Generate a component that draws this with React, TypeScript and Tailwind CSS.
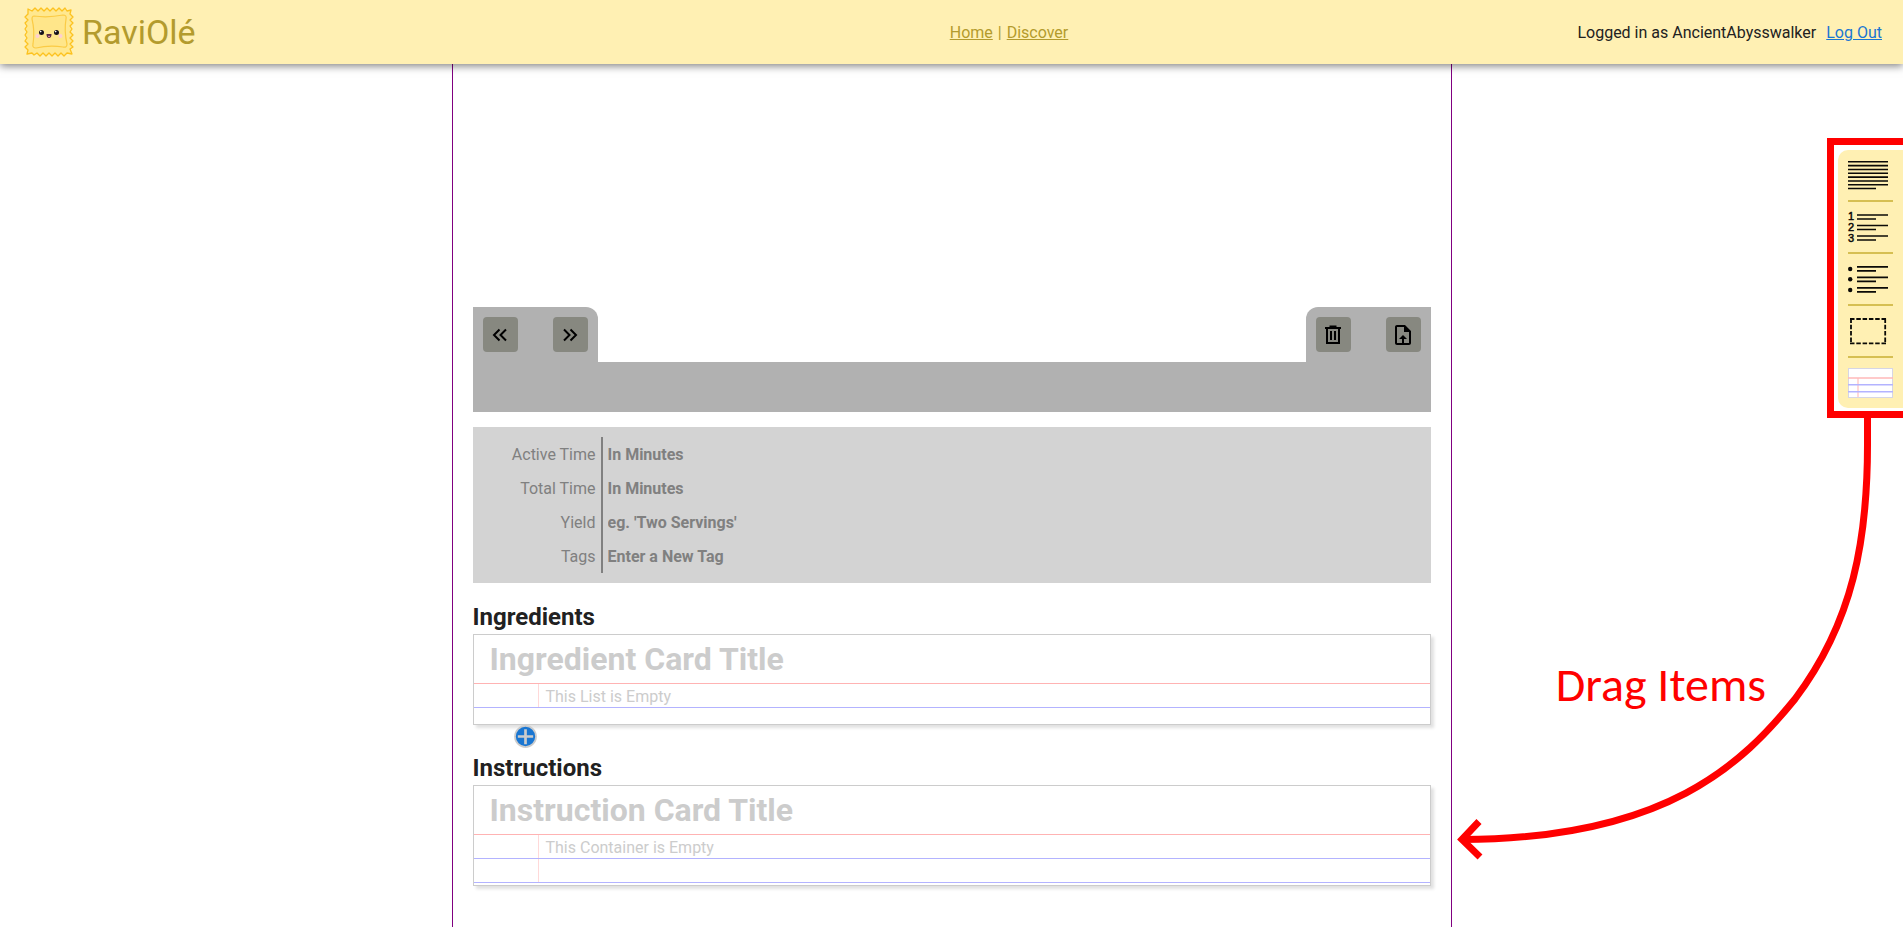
import { type ReactNode } from "react";

function RavioliLogo() {
  return (
    <svg width="50" height="52" viewBox="0 0 50 52" aria-hidden="true">
      <path
        d="M4 3 L8 5 L11 2 L14 5 L17 2 L20 5 L23 2 L26 5 L29 2 L32 5 L35 2 L38 5 L41 2 L43 5 L47 4 L46 8 L49 11 L46 14 L49 17 L46 20 L48 23 L46 26 L49 29 L46 32 L49 35 L46 38 L49 41 L46 43 L48 48 L43 47 L40 50 L37 47 L34 50 L31 47 L28 50 L25 47 L22 50 L19 47 L16 50 L13 47 L10 49 L8 47 L3 48 L4 44 L1 41 L4 38 L1 35 L3 32 L1 29 L3 26 L1 23 L3 20 L1 17 L4 14 L1 11 L4 8 Z"
        fill="#ffe88f"
        stroke="#fcc21f"
        strokeWidth="1.3"
        strokeLinejoin="round"
      />
      <path
        d="M10 10 Q24 12 39 9 Q43 9 42 13 Q40 25 43 38 Q43 42 39 41 Q25 39 12 42 Q8 42 9 38 Q11 25 8 13 Q8 10 10 10 Z"
        fill="#ffe68a"
        stroke="#fbcb45"
        strokeWidth="1.2"
      />
      <circle cx="13.5" cy="30" r="2" fill="#ffcfd0" />
      <circle cx="36.5" cy="30" r="2" fill="#ffcfd0" />
      <circle cx="17.5" cy="26.5" r="2.5" fill="#15111a" />
      <circle cx="32.5" cy="26.5" r="2.5" fill="#15111a" />
      <circle cx="16.7" cy="25.6" r="0.8" fill="#fff" />
      <circle cx="31.7" cy="25.6" r="0.8" fill="#fff" />
      <path d="M22.500 28 H27.500 Q27.500 32 25 32 Q22.500 32 22.500 28 Z" fill="#5b2b45" />
      <path d="M24 30.500 Q25 29.500 26 30.500 Z" fill="#f29bb0" stroke="#f29bb0" strokeWidth="0.6" />
    </svg>
  );
}

function Chevrons({ flip = false }: { flip?: boolean }) {
  return (
    <svg width="24" height="24" viewBox="0 0 24 24" fill="none" stroke="#000" strokeWidth="2" aria-hidden="true">
      <path d={flip ? "M6 6.500 L11.500 12 L6 17.500 M12.500 6.500 L18 12 L12.500 17.500" : "M11.500 6.500 L6 12 L11.500 17.500 M18 6.500 L12.500 12 L18 17.500"} />
    </svg>
  );
}

function UploadFile() {
  return (
    <svg width="24" height="24" viewBox="0 0 24 24" aria-hidden="true">
      <path d="M14 2H6c-1.100 0-2 .9-2 2v16c0 1.100.9 2 2 2h12c1.100 0 2-.9 2-2V8l-6-6zm4 18H6V4h7v5h5v11zM8 16h3v4h2v-4h3l-4-4z" />
    </svg>
  );
}

function Trash() {
  return (
    <svg width="24" height="24" viewBox="0 0 24 24" fill="none" stroke="#000" strokeWidth="2" aria-hidden="true">
      <path d="M4 5 H20 M8.500 3.500 H15.500 M6 5 V20 H18 V5 M10 8 V17 M14 8 V17" />
    </svg>
  );
}

function ToolButton({ label, children }: { label: string; children: ReactNode }) {
  return (
    <button type="button" aria-label={label} className="flex size-[35px] items-center justify-center rounded bg-[#878880]">
      {children}
    </button>
  );
}

function MetaRow({ id, label, placeholder }: { id: string; label: string; placeholder: string }) {
  return (
    <div className="flex h-[34px] items-center">
      <label htmlFor={id} className="w-[118px] shrink-0 pt-[2px] pr-[5px] text-right text-[#808080]">
        {label}
      </label>
      <div className="flex h-full flex-1 items-center border-l-2 border-[#808080] pl-[5px]">
        <input id={id} placeholder={placeholder} className="w-full bg-transparent pt-[2px] font-bold outline-none placeholder:text-[#808080]" />
      </div>
    </div>
  );
}

function RecipeCard({ title, empty, children }: { title: string; empty: string; children: ReactNode }) {
  return (
    <div className="border border-[#ccc] bg-white shadow-[3px_3px_3px_rgba(0,0,0,0.12)]">
      <input
        aria-label={title}
        placeholder={title}
        className="block h-12 w-full bg-transparent px-4 text-[32px] font-bold outline-none placeholder:text-[#ccc]"
      />
      <div className="flex h-[25px] border-y border-t-[#ffb3b3] border-b-[#b3b3ff] text-[#ccc]">
        <div className="w-[65px] border-r border-[#ffd9d9]" />
        <p className="pl-[7px] leading-[26px]">{empty}</p>
      </div>
      {children}
    </div>
  );
}

function ParagraphIcon() {
  return (
    <svg width="45" height="30" viewBox="0 0 45 30" stroke="#0b0a07" strokeWidth="1.6" aria-hidden="true">
      <path d="M0 1.800H40M0 5.600H40M0 9.500H40M0 13.300H40M0 17.100H40M0 21H40M0 24.800H40M0 28.500H28" />
    </svg>
  );
}

function NumberedIcon() {
  return (
    <svg width="45" height="30" viewBox="0 0 45 30" className="overflow-visible" fill="none" stroke="#0b0a07" strokeWidth="1.7" aria-hidden="true">
      <path d="M9 3H40M9 7H28M9 13.500H40M9 17.500H28M9 24H40M9 28H28" />
      <g fill="#0b0a07" strokeWidth="0.5" fontFamily="Liberation Sans, sans-serif" fontSize="11">
        <text x="0" y="8">1</text>
        <text x="0" y="19">2</text>
        <text x="0" y="30">3</text>
      </g>
    </svg>
  );
}

function BulletedIcon() {
  return (
    <svg width="45" height="30" viewBox="0 0 45 30" stroke="#0b0a07" strokeWidth="1.7" aria-hidden="true">
      <path d="M9 2.800H40M9 6.800H28M9 13.300H40M9 17.300H28M9 23.800H40M9 27.800H28" />
      <g stroke="none" fill="#0b0a07">
        <circle cx="2.200" cy="5" r="2.200" />
        <circle cx="2.200" cy="15.300" r="2.200" />
        <circle cx="2.200" cy="26" r="2.200" />
      </g>
    </svg>
  );
}

function ContainerIcon() {
  return (
    <svg width="45" height="30" viewBox="0 0 45 30" fill="none" stroke="#0b0a07" strokeWidth="1.8" aria-hidden="true">
      <path d="M2 3H38M2 27.300H38" strokeDasharray="4.500 1.800" />
      <path d="M3 2.500V28M37.200 2.500V28" strokeDasharray="4.500 1.800" />
    </svg>
  );
}

function CardIcon() {
  return (
    <svg width="45" height="30" viewBox="0 0 45 30" fill="none" aria-hidden="true">
      <rect x="0.500" y="0.500" width="44" height="29" fill="#fff" stroke="#d6d6e4" />
      <path d="M10 10V29" stroke="#ffd9d9" strokeWidth="2" />
      <path d="M0 10H45" stroke="#ffb9b9" strokeWidth="1.6" />
      <path d="M0 16.700H45M0 23.700H45" stroke="#b3b3ff" strokeWidth="1.6" />
    </svg>
  );
}

const tools = [
  { label: "Paragraph", icon: <ParagraphIcon /> },
  { label: "Numbered list", icon: <NumberedIcon /> },
  { label: "Bulleted list", icon: <BulletedIcon /> },
  { label: "Container", icon: <ContainerIcon /> },
  { label: "Card", icon: <CardIcon /> },
];

export default function App() {
  return (
    <div className="relative flex min-h-screen flex-col overflow-hidden bg-white font-[Roboto,sans-serif] text-base text-[#212121]">
      <header className="relative z-10 grid h-16 shrink-0 grid-cols-[1fr_auto_1fr] items-center bg-[#fff0b3] pr-[21px] pl-6 shadow-[0_2px_8px_rgba(0,0,0,0.5)]">
        <div className="flex items-center gap-2">
          <RavioliLogo />
          <h1 className="text-[34px] leading-none text-[#b39b2d]">RaviOlé</h1>
        </div>
        <nav className="flex gap-[5px] pt-[2px] pl-28 text-[#b39b2d]">
          <a href="#home" className="underline">Home</a>
          <span>|</span>
          <a href="#discover" className="underline">Discover</a>
        </nav>
        <div className="flex justify-end gap-[10px] pt-[2px]">
          <span>Logged in as AncientAbysswalker</span>
          <a href="#logout" className="text-[#1976d2] underline">Log Out</a>
        </div>
      </header>

      <main className="mx-auto w-full max-w-[1000px] flex-1 border-x border-[#800080] px-5 pt-[243px]">
        <div className="flex justify-between">
          <div className="flex h-[55px] gap-[35px] rounded-tr-xl bg-[#b1b1b1] p-[10px]">
            <ToolButton label="Previous"><Chevrons /></ToolButton>
            <ToolButton label="Next"><Chevrons flip /></ToolButton>
          </div>
          <div className="flex h-[55px] gap-[35px] rounded-tl-xl bg-[#b1b1b1] p-[10px]">
            <ToolButton label="Delete"><Trash /></ToolButton>
            <ToolButton label="Upload"><UploadFile /></ToolButton>
          </div>
        </div>
        <div className="h-[50px] bg-[#b1b1b1]" />

        <section className="mt-[15px] bg-[#d3d3d3] p-[10px]">
          <MetaRow id="active" label="Active Time" placeholder="In Minutes" />
          <MetaRow id="total" label="Total Time" placeholder="In Minutes" />
          <MetaRow id="yield" label="Yield" placeholder="eg. 'Two Servings'" />
          <MetaRow id="tags" label="Tags" placeholder="Enter a New Tag" />
        </section>

        <h2 className="mt-5 mb-[3px] text-2xl leading-7 font-bold">Ingredients</h2>
        <RecipeCard title="Ingredient Card Title" empty="This List is Empty">
          <div className="h-4" />
        </RecipeCard>
        <div className="flex pl-[41px]">
          <button type="button" aria-label="Add ingredient card" className="size-[23px]">
            <svg width="23" height="23" viewBox="0 0 24 24" aria-hidden="true">
              <circle cx="12" cy="12" r="11" fill="#1976d2" stroke="#ccc" strokeWidth="1.8" />
              <path d="M12 4.500V20M4 12H20" stroke="#ccc" strokeWidth="2.8" />
            </svg>
          </button>
        </div>
        <h2 className="mt-[6px] mb-[3px] text-2xl leading-7 font-bold">Instructions</h2>
        <RecipeCard title="Instruction Card Title" empty="This Container is Empty">
          <div className="flex h-6 border-b border-[#b3b3ff]">
            <div className="w-[65px] border-r border-[#ffd9d9]" />
          </div>
          <div className="h-[2px]" />
        </RecipeCard>
      </main>

      <aside className="absolute top-[138px] right-0 border-7 border-r-0 border-[#ff0000] pt-[5px] pb-[3px] pl-1">
        <div className="rounded-l-[10px] bg-[#fff0b3] p-[10px]">
          <ul className="flex flex-col gap-[10px]">
            {tools.map((tool, i) => (
              <li key={tool.label} className={i < 4 ? "border-b-2 border-[#d6bf52] pb-[10px]" : ""}>
                <button type="button" aria-label={tool.label} className="block">{tool.icon}</button>
              </li>
            ))}
          </ul>
        </div>
      </aside>
      <svg width="453" height="460" viewBox="1450 415 453 460" fill="none" stroke="#ff0000" strokeWidth="7" className="pointer-events-none absolute top-[415px] right-0" aria-hidden="true">
        <path d="M1867.500 415 V440 C1868 540 1853 622 1795 699 C1743 763 1667 839 1462 839.500" />
        <path d="M1479 821.500 L1462 839.500 L1480 857" />
      </svg>
      <p className="absolute top-[655px] right-[137px] font-[Carlito,Lato,sans-serif] text-[48px] leading-[60px] text-[#ff0000]">Drag Items</p>
    </div>
  );
}
